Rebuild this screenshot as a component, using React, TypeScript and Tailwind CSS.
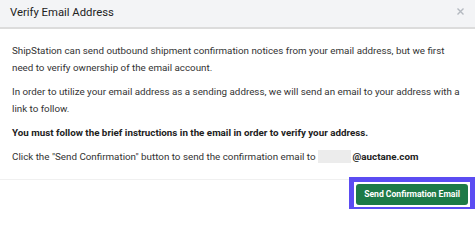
import React from "react";

export default function App() {
  return (
    <div className="w-[475px] h-[209px] bg-white overflow-hidden text-[#333]" style={{ fontFamily: "Roboto, 'Liberation Sans', sans-serif" }}>
      <div className="h-[29px] bg-[#f3f4f6] border-b-2 border-[#dcdcdc] flex items-center justify-between pl-[10px] pr-[11px]">
        <span className="text-[11.3px] text-[#222]">Verify Email Address</span>
        <svg width="7" height="7" viewBox="0 0 7 7" className="mt-[-4px]">
          <path d="M0.5 0.5 L6.5 6.5 M6.5 0.5 L0.5 6.5" stroke="#b4b9c0" strokeWidth="1.4" />
        </svg>
      </div>
      <div className="px-[12px] pt-[13px] text-[9.8px] leading-[17px]">
        <p>ShipStation can send outbound shipment confirmation notices from your email address, but we first need to verify ownership of the email account.</p>
        <p className="mt-[7px]">In order to utilize your email address as a sending address, we will send an email to your address with a link to follow.</p>
        <p className="mt-[7px] font-bold text-[#222]">You must follow the brief instructions in the email in order to verify your address.</p>
        <p className="mt-[7px] flex items-center">Click the "Send Confirmation" button to send the confirmation email to <span className="inline-block w-[33px] h-[13px] bg-[#ececec] mx-[2px]"></span><span className="font-bold text-[#222]">@auctane.com</span></p>
      </div>
      <div className="mt-[14px] border-t border-[#f0f0f0] flex justify-end pr-0">
        <div className="mt-[-3px] border-[5px] border-[#5b4cf2] p-[2px]">
          <button className="bg-[#1d7a47] text-white font-bold text-[8.6px] rounded-[3px] px-[8px] h-[21px] block">Send Confirmation Email</button>
        </div>
      </div>
    </div>
  );
}
